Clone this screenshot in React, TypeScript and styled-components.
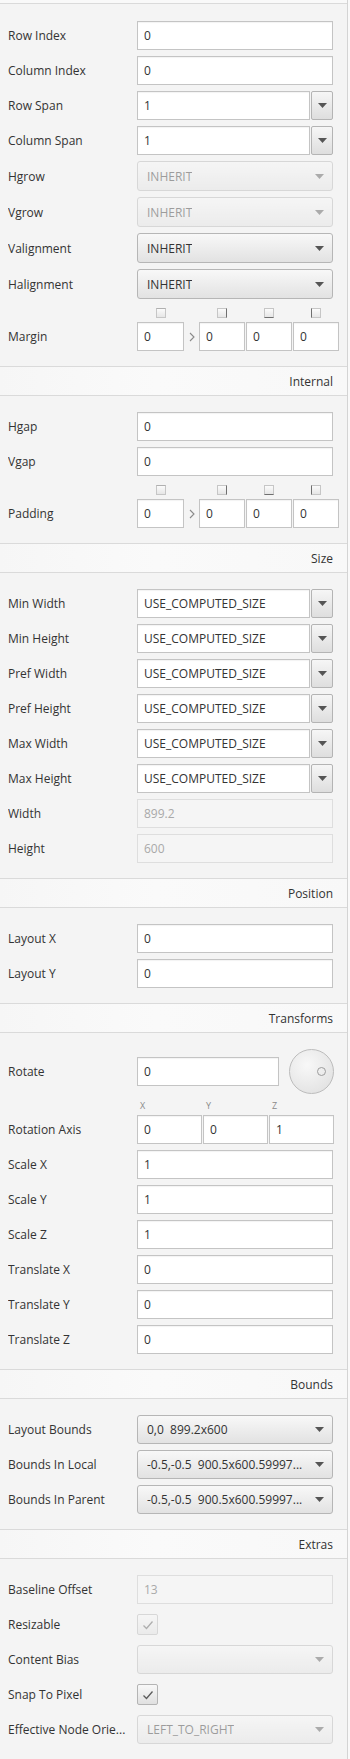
import React from "react";
import styled, { createGlobalStyle } from "styled-components";

const GlobalStyle = createGlobalStyle`
  html, body {
    margin: 0;
    padding: 0;
    background: #f9f9f9;
  }
  body {
    font-family: "Open Sans", "Noto Sans", "Liberation Sans", sans-serif;
    font-size: 12px;
    color: #333;
  }
  * {
    box-sizing: border-box;
  }
`;

type Side = "top" | "right" | "bottom" | "left";

export default function App() {
  return (
    <>
      <GlobalStyle />
      <Panel>
        <TopStub />
        <Body $top>
          <FieldRow label="Row Index" value="0" />
          <FieldRow label="Column Index" value="0" />
          <SpinnerRow label="Row Span" value="1" />
          <SpinnerRow label="Column Span" value="1" />
          <ComboRow label="Hgrow" value="INHERIT" disabled tall />
          <ComboRow label="Vgrow" value="INHERIT" disabled tall />
          <ComboRow label="Valignment" value="INHERIT" tall />
          <ComboRow label="Halignment" value="INHERIT" tall />
          <InsetsRow label="Margin" />
        </Body>

        <SectionHeader>Internal</SectionHeader>
        <Body>
          <FieldRow label="Hgap" value="0" />
          <FieldRow label="Vgap" value="0" />
          <InsetsRow label="Padding" />
        </Body>

        <SectionHeader>Size</SectionHeader>
        <Body>
          <SpinnerRow label="Min Width" value="USE_COMPUTED_SIZE" />
          <SpinnerRow label="Min Height" value="USE_COMPUTED_SIZE" />
          <SpinnerRow label="Pref Width" value="USE_COMPUTED_SIZE" />
          <SpinnerRow label="Pref Height" value="USE_COMPUTED_SIZE" />
          <SpinnerRow label="Max Width" value="USE_COMPUTED_SIZE" />
          <SpinnerRow label="Max Height" value="USE_COMPUTED_SIZE" />
          <FieldRow label="Width" value="899.2" disabled />
          <FieldRow label="Height" value="600" disabled />
        </Body>

        <SectionHeader>Position</SectionHeader>
        <Body>
          <FieldRow label="Layout X" value="0" />
          <FieldRow label="Layout Y" value="0" />
        </Body>

        <SectionHeader>Transforms</SectionHeader>
        <Body>
          <Row>
            <Label>Rotate</Label>
            <RotateBox>
              <TextField readOnly value="0" />
              <Dial>
                <DialKnob />
              </Dial>
            </RotateBox>
          </Row>
          <Row $alignEnd>
            <Label>Rotation Axis</Label>
            <AxisGrid>
              <AxisLabel>X</AxisLabel>
              <AxisLabel>Y</AxisLabel>
              <AxisLabel>Z</AxisLabel>
              <TextField readOnly value="0" />
              <TextField readOnly value="0" />
              <TextField readOnly value="1" />
            </AxisGrid>
          </Row>
          <FieldRow label="Scale X" value="1" />
          <FieldRow label="Scale Y" value="1" />
          <FieldRow label="Scale Z" value="1" />
          <FieldRow label="Translate X" value="0" />
          <FieldRow label="Translate Y" value="0" />
          <FieldRow label="Translate Z" value="0" />
        </Body>

        <SectionHeader>Bounds</SectionHeader>
        <Body>
          <ComboRow label="Layout Bounds" value="0,0  899.2x600" />
          <ComboRow label="Bounds In Local" value="-0.5,-0.5  900.5x600.59997..." />
          <ComboRow label="Bounds In Parent" value="-0.5,-0.5  900.5x600.59997..." />
        </Body>

        <SectionHeader>Extras</SectionHeader>
        <Body>
          <FieldRow label="Baseline Offset" value="13" disabled />
          <CheckRow label="Resizable" disabled />
          <ComboRow label="Content Bias" value="" disabled />
          <CheckRow label="Snap To Pixel" />
          <ComboRow label="Effective Node Orie..." value="LEFT_TO_RIGHT" disabled />
        </Body>
      </Panel>
    </>
  );
}

const FieldRow = ({ label, value, disabled }: { label: string; value: string; disabled?: boolean }) => (
  <Row>
    <Label>{label}</Label>
    <TextField readOnly value={value} $disabled={disabled} />
  </Row>
);

const SpinnerRow = ({ label, value }: { label: string; value: string }) => (
  <Row>
    <Label>{label}</Label>
    <SpinnerBox>
      <TextField readOnly value={value} />
      <MenuButton>
        <Arrow />
      </MenuButton>
    </SpinnerBox>
  </Row>
);

const ComboRow = ({
  label,
  value,
  disabled,
  tall,
}: {
  label: string;
  value: string;
  disabled?: boolean;
  tall?: boolean;
}) => (
  <Row>
    <Label>{label}</Label>
    <Combo $disabled={disabled} $tall={tall}>
      <ComboText>{value}</ComboText>
      <Arrow />
    </Combo>
  </Row>
);

const CheckRow = ({ label, disabled }: { label: string; disabled?: boolean }) => (
  <Row>
    <Label>{label}</Label>
    <CheckBox $disabled={disabled}>
      <svg width="12" height="10" viewBox="0 0 12 10">
        <polyline points="1.5,5.5 4.5,8.5 10.5,1.5" fill="none" stroke="#5a5a5a" strokeWidth="1.3" />
      </svg>
    </CheckBox>
  </Row>
);

const sides: Side[] = ["top", "right", "bottom", "left"];

const InsetsRow = ({ label }: { label: string }) => (
  <Row $alignEnd>
    <Label>{label}</Label>
    <InsetsGrid>
      <InsetToggle $side="top" />
      <span />
      {sides.slice(1).map((s) => (
        <InsetToggle key={s} $side={s} />
      ))}
      <TextField readOnly value="0" />
      <Chevron>
        <svg width="6" height="10" viewBox="0 0 6 10">
          <polyline points="1,1 5,5 1,9" fill="none" stroke="#8a8a8a" strokeWidth="1.1" />
        </svg>
      </Chevron>
      <TextField readOnly value="0" />
      <TextField readOnly value="0" />
      <TextField readOnly value="0" />
    </InsetsGrid>
  </Row>
);

const Arrow = () => (
  <svg width="9" height="5" viewBox="0 0 9 5">
    <polygon points="0,0 9,0 4.5,5" fill="#555" />
  </svg>
);

const Panel = styled.div`
  width: 348px;
  background: #f4f4f4;
  border-right: 1px solid #d4d4d4;
`;

const TopStub = styled.div`
  height: 4px;
  background: #f9f9f9;
  border-bottom: 1px solid #dadada;
`;

const SectionHeader = styled.div`
  height: 30px;
  display: flex;
  align-items: center;
  justify-content: flex-end;
  padding-right: 14px;
  border-top: 1px solid #dadada;
  border-bottom: 1px solid #dadada;
  background: linear-gradient(to right, #f6f6f6, #fafafa 45%, #f8f8f8);
  font-size: 12px;
  color: #333;
`;

const Body = styled.div<{ $top?: boolean }>`
  display: flex;
  flex-direction: column;
  gap: 6px;
  padding: ${({ $top }) => ($top ? "17px" : "16px")} 13px 15px 8px;
`;

const Row = styled.div<{ $alignEnd?: boolean }>`
  display: grid;
  grid-template-columns: 129px 196px;
  align-items: ${({ $alignEnd }) => ($alignEnd ? "end" : "center")};
`;

const Label = styled.div`
  min-height: 29px;
  display: flex;
  align-items: center;
  white-space: nowrap;
  overflow: hidden;
  color: #333;
`;

const TextField = styled.input<{ $disabled?: boolean }>`
  display: block;
  width: 100%;
  min-width: 0;
  height: 29px;
  margin: 0;
  padding: 0 6px;
  border: 1px solid ${({ $disabled }) => ($disabled ? "#dedede" : "#c4c4c4")};
  border-radius: 0;
  background: ${({ $disabled }) => ($disabled ? "#f5f5f5" : "#fff")};
  box-shadow: ${({ $disabled }) => ($disabled ? "none" : "inset 0 1px 1px rgba(0, 0, 0, 0.05)")};
  font-family: inherit;
  font-size: 12px;
  color: ${({ $disabled }) => ($disabled ? "#a9a9a9" : "#333")};
  outline: none;
`;

const SpinnerBox = styled.div`
  display: grid;
  grid-template-columns: 1fr 22px;
  gap: 1px;
`;

const MenuButton = styled.div`
  height: 29px;
  display: flex;
  align-items: center;
  justify-content: center;
  border: 1px solid #b4b4b4;
  border-radius: 2px;
  background: linear-gradient(#f6f6f6, #dedede);
`;

const Combo = styled.div<{ $disabled?: boolean; $tall?: boolean }>`
  height: ${({ $tall }) => ($tall ? "30px" : "29px")};
  display: flex;
  align-items: center;
  justify-content: space-between;
  padding: 0 8px 0 9px;
  border: 1px solid #b6b6b6;
  border-radius: 3px;
  background: linear-gradient(#f8f8f8, #e2e2e2);
  opacity: ${({ $disabled }) => ($disabled ? 0.45 : 1)};
`;

const ComboText = styled.span`
  white-space: pre;
  overflow: hidden;
  color: #333;
`;

const CheckBox = styled.div<{ $disabled?: boolean }>`
  width: 21px;
  height: 21px;
  display: flex;
  align-items: center;
  justify-content: center;
  border: 1px solid #b4b4b4;
  border-radius: 2px;
  background: linear-gradient(#f8f8f8, #e0e0e0);
  opacity: ${({ $disabled }) => ($disabled ? 0.45 : 1)};
`;

const InsetsGrid = styled.div`
  width: 202px;
  display: grid;
  grid-template-columns: 47px 13px 46px 46px 46px;
  column-gap: 1px;
  row-gap: 4px;
`;

const InsetToggle = styled.span<{ $side: Side }>`
  justify-self: center;
  width: 10px;
  height: 10px;
  margin-top: 3px;
  border: 1px solid #c6c6c6;
  border-${({ $side }) => $side}-color: ${({ $side }) => ($side === "top" ? "#b0b0b0" : "#6f6f6f")};
  background: linear-gradient(#fbfbfb, #e6e6e6);
`;

const Chevron = styled.span`
  display: flex;
  align-items: center;
  justify-content: center;
`;

const RotateBox = styled.div`
  display: grid;
  grid-template-columns: 142px 45px;
  column-gap: 10px;
  align-items: center;
`;

const Dial = styled.div`
  position: relative;
  width: 45px;
  height: 45px;
  border-radius: 50%;
  border: 1px solid #bcbcbc;
  background: radial-gradient(circle at 40% 35%, #f8f8f8, #e4e4e4 75%);
`;

const DialKnob = styled.span`
  position: absolute;
  right: 7px;
  top: 17px;
  width: 9px;
  height: 9px;
  border-radius: 50%;
  border: 1px solid #9c9c9c;
`;

const AxisGrid = styled.div`
  width: 197px;
  display: grid;
  grid-template-columns: repeat(3, 65px);
  column-gap: 1px;
  row-gap: 3px;
`;

const AxisLabel = styled.span`
  padding-left: 3px;
  font-size: 9px;
  line-height: 12px;
  color: #8a8a8a;
`;
